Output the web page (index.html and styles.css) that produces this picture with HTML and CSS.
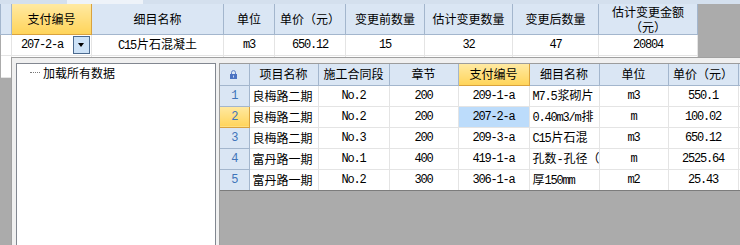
FILE: index.html
```html
<!DOCTYPE html>
<html lang="zh-CN">
<head>
    <meta charset="UTF-8">
    <title>变更清单</title>
    <link rel="stylesheet" href="styles.css">
</head>
<body>
    <div class="tabs"><span class="tabs__item"></span></div>

    <table class="grid grid--top">
        <colgroup>
            <col style="width:11px"><col style="width:80px"><col style="width:132px"><col style="width:51px">
            <col style="width:71px"><col style="width:79px"><col style="width:88px"><col style="width:86px"><col style="width:99px">
        </colgroup>
        <thead>
            <tr>
                <th></th>
                <th class="is-active">支付编号</th>
                <th>细目名称</th>
                <th>单位</th>
                <th>单价（元）</th>
                <th>变更前数量</th>
                <th>估计变更数量</th>
                <th>变更后数量</th>
                <th class="grid__wrap">估计变更金额<br>（元）</th>
            </tr>
        </thead>
        <tbody>
            <tr>
                <td></td>
                <td class="grid__edit">
                    <div class="combo">
                        <span class="n">207-2-a</span>
                        <button class="combo__btn" type="button" title="展开"></button>
                    </div>
                </td>
                <td><span class="n">C15</span>片石混凝土</td>
                <td class="n">m3</td>
                <td class="n">650.12</td>
                <td class="n">15</td>
                <td class="n">32</td>
                <td class="n">47</td>
                <td class="n">20804</td>
            </tr>
            <tr class="grid__new">
                <td></td><td></td><td></td><td></td><td></td><td></td><td></td><td></td><td></td>
            </tr>
        </tbody>
    </table>

    <!-- dropdown opened from the 支付编号 cell -->
    <div class="popup">
        <div class="tree">
            <div class="tree__item"><span class="tree__line"></span>加载所有数据</div>
        </div>
        <div class="panel">
            <table class="grid grid--pick">
                <colgroup>
                    <col style="width:29px"><col style="width:69px"><col style="width:71px"><col style="width:69px"><col style="width:71px">
                    <col style="width:70px"><col style="width:69px"><col style="width:70px"><col style="width:70px">
                </colgroup>
                <thead>
                    <tr>
                        <th class="grid__lock">
                            <svg viewBox="0 0 7 9" width="7" height="9" aria-hidden="true">
                                <path d="M1.5 4.5V2.6a2 2 0 0 1 4 0v1.9" fill="none" stroke="#5b7fc6" stroke-width="1"/>
                                <rect x="0" y="4" width="7" height="5" fill="#4a72c2"/>
                                <rect x="3" y="5.5" width="1" height="2" fill="#c9d8f2"/>
                            </svg>
                        </th>
                        <th>项目名称</th>
                        <th>施工合同段</th>
                        <th>章节</th>
                        <th class="is-active">支付编号</th>
                        <th>细目名称</th>
                        <th>单位</th>
                        <th>单价（元）</th>
                        <th></th>
                    </tr>
                </thead>
                <tbody>
                    <tr>
                        <td class="grid__num n">1</td>
                        <td class="grid__left">良梅路二期</td>
                        <td class="n">No.2</td>
                        <td class="n">200</td>
                        <td class="n">209-1-a</td>
                        <td class="grid__left"><span class="n">M7.5</span>浆砌片</td>
                        <td class="n">m3</td>
                        <td class="n">550.1</td>
                        <td></td>
                    </tr>
                    <tr class="is-current">
                        <td class="grid__num n">2</td>
                        <td class="grid__left">良梅路二期</td>
                        <td class="n">No.2</td>
                        <td class="n">200</td>
                        <td class="n grid__sel">207-2-a</td>
                        <td class="grid__left"><span class="n">0.40m3/m</span>排</td>
                        <td class="n">m</td>
                        <td class="n">100.02</td>
                        <td></td>
                    </tr>
                    <tr>
                        <td class="grid__num n">3</td>
                        <td class="grid__left">良梅路二期</td>
                        <td class="n">No.3</td>
                        <td class="n">200</td>
                        <td class="n">209-3-a</td>
                        <td class="grid__left"><span class="n">C15</span>片石混</td>
                        <td class="n">m3</td>
                        <td class="n">650.12</td>
                        <td></td>
                    </tr>
                    <tr>
                        <td class="grid__num n">4</td>
                        <td class="grid__left">富丹路一期</td>
                        <td class="n">No.1</td>
                        <td class="n">400</td>
                        <td class="n">419-1-a</td>
                        <td class="grid__left">孔数<span class="n">-</span>孔径（</td>
                        <td class="n">m</td>
                        <td class="n">2525.64</td>
                        <td></td>
                    </tr>
                    <tr>
                        <td class="grid__num n">5</td>
                        <td class="grid__left">富丹路一期</td>
                        <td class="n">No.2</td>
                        <td class="n">300</td>
                        <td class="n">306-1-a</td>
                        <td class="grid__left">厚<span class="n">150mm</span></td>
                        <td class="n">m2</td>
                        <td class="n">25.43</td>
                        <td></td>
                    </tr>
                </tbody>
            </table>
        </div>
    </div>
</body>
</html>
```

FILE: styles.css
```css
* {
    border: 0;
    box-sizing: border-box;
    margin: 0;
    padding: 0;
}
:root {
    --gray: #ababab;
    --head: #dae6f4;
    --head-line: #a3b6cd;
    --cell-line: #e4e4e4;
    --gold-top: #ffe9a2;
    --gold-bot: #ffd45a;
    --gold-line: #d9a23e;
}
html,
body {
    background-color: var(--gray);
}
body {
    color: #000;
    font: 12px/14px "Noto Sans CJK SC", sans-serif;
    width: 740px;
    height: 245px;
    overflow: hidden;
    position: relative;
}
.n {
    font-family: "Liberation Mono", "Noto Sans CJK SC", monospace;
    letter-spacing: -1.2px;
}
span.n {
    margin-right: 1px;
}
.tabs {
    background-color: #d4e0ee;
    display: flex;
    height: 4px;
}
.tabs__item {
    background-color: #eef3f9;
    margin-left: 67px;
    width: 76px;
}

/* Grids */
.grid {
    border-collapse: collapse;
    table-layout: fixed;
}
.grid th,
.grid td {
    font-weight: normal;
    overflow: hidden;
    padding: 0;
    text-align: center;
    white-space: nowrap;
}
.grid th {
    background-color: var(--head);
    border: 1px solid var(--head-line);
}
.grid td {
    background-color: #fff;
    border: 1px solid var(--cell-line);
}
.grid th.is-active {
    background: linear-gradient(var(--gold-top), var(--gold-bot));
    border-color: var(--gold-line);
}
.grid--top {
    width: 697px;
}
.grid--top th {
    border-top: 0;
    height: 30px;
}
.grid--top td {
    height: 21px;
}
.grid--top tbody td:first-child {
    border-left: 0;
}
.grid__wrap {
    line-height: 15px;
}
.grid__new td {
    height: 22px;
}
.grid__edit {
    padding: 0;
}
.combo {
    align-items: center;
    display: flex;
    justify-content: space-between;
    padding: 0 1px 0 9px;
}
.combo__btn {
    background-color: #cde2f7;
    border: 1px solid #4b6a8f;
    display: block;
    height: 18px;
    position: relative;
    width: 17px;
}
.combo__btn:before {
    border-left: 3.5px solid transparent;
    border-right: 3.5px solid transparent;
    border-top: 4px solid #000;
    content: "";
    left: 4px;
    position: absolute;
    top: 6px;
}

/* Popup */
.popup {
    background-color: #f0f0f0;
    border: 1px solid #a0a0a0;
    border-right: 0;
    border-bottom: 0;
    display: flex;
    gap: 3px;
    padding: 5px 0 0 4px;
    position: absolute;
    left: 11px;
    top: 57px;
    width: 729px;
    height: 188px;
}
.tree {
    background-color: #fff;
    border: 1px solid #828790;
    border-bottom: 0;
    flex: none;
    width: 200px;
}
.tree__item {
    align-items: center;
    display: flex;
    font-size: 12px;
    height: 17px;
    padding-left: 13px;
}
.tree__line {
    border-top: 1px dotted #7a7a7a;
    margin-right: 3px;
    width: 10px;
}
.panel {
    background-color: var(--gray);
    border: 1px solid #9c9c9c;
    border-right: 0;
    border-bottom: 0;
    flex: 1;
    min-width: 0;
    overflow: hidden;
}
.grid--pick {
    width: 588px;
}
.grid--pick th {
    border-top: 0;
    height: 21px;
}
.grid--pick th:first-child,
.grid--pick td:first-child {
    border-left: 0;
}
.grid--pick td {
    height: 21px;
}
.grid--pick tbody tr:last-child td {
    border-bottom-color: #7c7c7c;
}
.grid__lock svg {
    display: block;
    margin: 0 auto;
    position: relative;
    left: -1px;
}
.grid td.grid__num {
    background-color: var(--head);
    border-color: var(--head-line);
    color: #3f74b9;
}
.is-current td.grid__num {
    background: linear-gradient(var(--gold-top), var(--gold-bot));
    border-color: var(--gold-line);
}
.grid td.grid__left {
    padding-left: 3px;
    text-align: left;
}
.grid td.grid__sel {
    background-color: #bcdcfb;
}
```
